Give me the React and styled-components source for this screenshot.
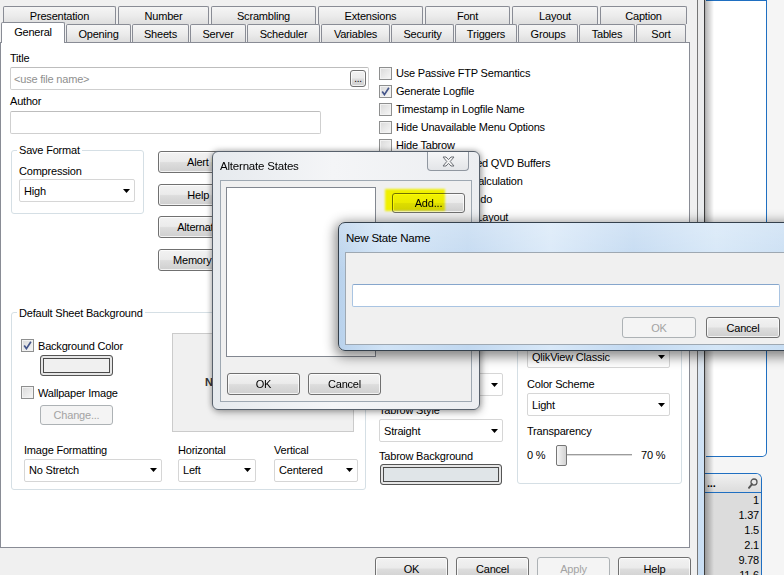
import React from "react";
import styled, { createGlobalStyle, css } from "styled-components";

const GlobalStyle = createGlobalStyle`
  html, body { margin: 0; padding: 0; background: #f0f0f0; overflow: hidden; }
  body {
    font-family: "Liberation Sans", Arial, sans-serif;
    font-size: 11px;
    letter-spacing: -0.2px;
    color: #000;
  }
  *, *::before, *::after { box-sizing: border-box; }
`;

const BACK_TABS = [
  ["Presentation", 113], ["Number", 91], ["Scrambling", 105], ["Extensions", 105],
  ["Font", 85], ["Layout", 86], ["Caption", 87],
];
const FRONT_TABS = [
  ["General", 65], ["Opening", 66], ["Sheets", 58], ["Server", 57], ["Scheduler", 74],
  ["Variables", 70], ["Security", 64], ["Triggers", 63], ["Groups", 61], ["Tables", 57], ["Sort", 51],
];
const OPTIONS = [
  ["Use Passive FTP Semantics", false],
  ["Generate Logfile", true],
  ["Timestamp in Logfile Name", false],
  ["Hide Unavailable Menu Options", false],
  ["Hide Tabrow", false],
  ["Keep Unreferenced QVD Buffers", false],
  ["Legacy Fractile Calculation", false],
  ["Enable Layout Undo", false],
  ["Use WebView in Layout", false],
];
const SIDE_BUTTONS = ["Alert Popup...", "Help Pages...", "Alternate States...", "Memory Statistics..."];
const LIST_VALUES = ["1", "1.37", "1.5", "2.1", "9.78", "11.6"];

/* ---------- layout shells ---------- */
const Screen = styled.div`
  position: relative;
  width: 784px;
  height: 575px;
  overflow: hidden;
  display: flex;
  background: #f0f0f0;
`;
const MainDialog = styled.div`
  flex: none;
  width: 697px;
  display: flex;
  flex-direction: column;
`;
const TabStrip = styled.div`
  flex: none;
  height: 42px;
  display: flex;
  flex-direction: column;
  position: relative;
  z-index: 2;
`;
const TabRow = styled.div`
  display: flex;
  align-items: flex-end;
  flex: none;
  height: 18px;
  margin-top: ${p => p.$mt || 0}px;
  padding-left: ${p => p.$pad}px;
  gap: ${p => p.$gap}px;
`;
const Tab = styled.div`
  flex: none;
  width: ${p => p.$w}px;
  height: 18px;
  display: flex;
  align-items: center;
  justify-content: center;
  padding-top: 1px;
  border: 1px solid #898c95;
  border-bottom: none;
  border-radius: 2px 2px 0 0;
  background: linear-gradient(#f5f5f5, #ececec 50%, #dedede);
  white-space: nowrap;
  ${p => p.$active && css`
    height: 21px;
    margin-bottom: -1px;
    padding-top: 0;
    padding-bottom: 3px;
    background: #fff;
    position: relative;
    z-index: 3;
  `}
`;
const Panel = styled.div`
  flex: none;
  width: 690px;
  height: 506px;
  background: #fff;
  border: 1px solid #898c95;
  display: grid;
  grid-template-columns: 369px 1fr;
  align-items: start;
  padding: 8px 0 0 9px;
`;
const Column = styled.div`
  display: flex;
  flex-direction: column;
  align-items: flex-start;
  padding-top: ${p => p.$pt || 0}px;
  margin-left: ${p => p.$ml || 0}px;
`;
const Row = styled.div`
  display: flex;
  align-items: flex-start;
  margin-top: ${p => p.$mt || 0}px;
  margin-left: ${p => p.$ml || 0}px;
  gap: ${p => p.$gap || 0}px;
`;

/* ---------- controls ---------- */
const FieldLabel = styled.div`
  height: 14px;
  line-height: 14px;
  white-space: nowrap;
  margin-top: ${p => p.$mt || 0}px;
`;
const TextBox = styled.div`
  flex: none;
  width: ${p => p.$w}px;
  height: 23px;
  margin-top: ${p => p.$mt || 0}px;
  display: flex;
  align-items: center;
  padding: 0 2px 0 3px;
  background: #fff;
  border: 1px solid #cfcfcf;
  border-top-color: #bdbdbd;
  border-radius: 2px;
  color: #8f8f8f;
  white-space: nowrap;
`;
const Placeholder = styled.span`
  flex: 1;
`;
const buttonFace = css`
  border: 1px solid #707070;
  border-radius: 3px;
  background: linear-gradient(#f2f2f2 0%, #ebebeb 47%, #dddddd 53%, #cfcfcf 100%);
  box-shadow: inset 0 0 0 1px rgba(255, 255, 255, 0.75);
`;
const DotsButton = styled.div`
  ${buttonFace};
  width: 16px;
  height: 17px;
  display: flex;
  align-items: flex-end;
  justify-content: center;
  padding-bottom: 2px;
  color: #000;
  font-size: 10px;
  line-height: 10px;
`;
const WinButton = styled.div`
  flex: none;
  width: ${p => p.$w}px;
  height: ${p => p.$h || 22}px;
  margin-left: ${p => p.$ml || 0}px;
  margin-top: ${p => p.$mt || 0}px;
  display: flex;
  align-items: center;
  justify-content: center;
  white-space: nowrap;
  overflow: hidden;
  ${buttonFace};
  ${p => p.$disabled && css`
    border-color: #adb2b5;
    background: #f4f4f4;
    box-shadow: none;
    color: #a3a3a3;
  `}
`;
const SelectBox = styled.div`
  flex: none;
  width: ${p => p.$w}px;
  height: 23px;
  margin-top: ${p => p.$mt || 0}px;
  display: flex;
  align-items: center;
  justify-content: space-between;
  padding: 0 4px 0 4px;
  background: #fff;
  border: 1px solid #d6d6d6;
  border-radius: 2px;
  white-space: nowrap;
`;
const Arrow = () => (
  <svg width="7" height="4" viewBox="0 0 7 4"><path d="M0 0H7L3.5 4Z" fill="#000" /></svg>
);
const Select = ({ w, mt, children }) => (
  <SelectBox $w={w} $mt={mt}><span>{children}</span><Arrow /></SelectBox>
);

const CheckRow = styled.div`
  display: flex;
  align-items: center;
  gap: 4px;
  flex: none;
  height: ${p => p.$h || 14}px;
  margin-top: ${p => p.$mt || 0}px;
  white-space: nowrap;
`;
const CheckBox = styled.span`
  flex: none;
  width: 13px;
  height: 13px;
  display: flex;
  align-items: center;
  justify-content: center;
  border: 1px solid #8e8f8f;
  background: linear-gradient(135deg, #d9d9d9, #f7f7f7);
  box-shadow: inset 0 0 0 1px #f2f2f2;
`;
const Check = ({ checked, children, h, mt }) => (
  <CheckRow $h={h} $mt={mt}>
    <CheckBox>
      {checked && (
        <svg width="9" height="9" viewBox="0 0 9 9">
          <path d="M1.2 4.6L3.4 7.6L7.9 0.8" fill="none" stroke="#44558a" strokeWidth="1.7" />
        </svg>
      )}
    </CheckBox>
    <span>{children}</span>
  </CheckRow>
);

const Group = styled.fieldset`
  flex: none;
  margin: 0;
  margin-left: ${p => p.$ml || 0}px;
  margin-top: ${p => p.$mt || 0}px;
  width: ${p => p.$w}px;
  height: ${p => p.$h}px;
  min-width: 0;
  border: 1px solid #d5dfe5;
  border-radius: 3px;
  padding: 0 0 0 ${p => p.$pl}px;
  display: flex;
  flex-direction: column;
  align-items: flex-start;
`;
const Legend = styled.legend`
  padding: 0 2px;
  margin-left: ${p => p.$ml || 0}px;
  line-height: 14px;
  white-space: nowrap;
`;
const ButtonStack = styled.div`
  display: flex;
  flex-direction: column;
  gap: 10.5px;
  padding-top: 8px;
  margin-left: 14px;
`;
const Swatch = styled.div`
  flex: none;
  width: ${p => p.$w}px;
  height: 21px;
  margin-left: ${p => p.$ml || 0}px;
  margin-top: ${p => p.$mt || 0}px;
  border: 1px solid #555;
  border-radius: 3px;
  background: ${p => p.$fill};
  box-shadow: inset 0 0 0 2px #e6e6e6, inset 0 0 0 3px #4a4a4a;
`;
const Preview = styled.div`
  width: 182px;
  height: 99px;
  display: flex;
  align-items: center;
  padding-left: 32px;
  background: #f0f0f0;
  border: 1px solid #cbcbcb;
  font-weight: bold;
  color: #333;
`;
const TopGrid = styled.div`
  display: grid;
  grid-template-columns: 151px 182px;
  margin-top: 13px;
`;
const SliderRow = styled.div`
  display: flex;
  align-items: center;
  height: 22px;
  margin-top: 6px;
  white-space: nowrap;
`;
const SliderEnd = styled.span`
  width: ${p => p.$w}px;
  margin-left: ${p => p.$ml || 0}px;
`;
const Slider = styled.div`
  width: 76px;
  height: 22px;
  display: flex;
  align-items: center;
`;
const Thumb = styled.div`
  flex: none;
  width: 11px;
  height: 21px;
  border: 1px solid #767676;
  border-radius: 2px;
  background: linear-gradient(90deg, #f7f7f7, #e4e4e4 50%, #d3d3d3);
`;
const Track = styled.div`
  flex: 1;
  height: 3px;
  border-top: 1px solid #9c9c9c;
  border-bottom: 1px solid #ffffff;
  background: #dadada;
`;
const ButtonBar = styled.div`
  flex: none;
  width: 691px;
  display: flex;
  justify-content: flex-end;
  gap: 8px;
  margin-top: 9px;
`;

/* ---------- sheet area at right ---------- */
const Divider = styled.div`
  flex: none;
  width: 8px;
  border-left: 1px solid #767676;
  border-right: 1px solid #3d3d3d;
  background: linear-gradient(#ececec 0%, #e9ecef 55%, #cfe2f5 75%, #c9def3 100%);
`;
const SheetArea = styled.div`
  position: relative;
  flex: 1;
  background: #f5f5f5;
  display: flex;
  flex-direction: column;
  align-items: flex-start;
  &::before {
    content: "";
    position: absolute;
    left: 0;
    top: 0;
    bottom: 0;
    width: 9px;
    background: linear-gradient(90deg, rgba(0,0,0,0.3), rgba(0,0,0,0));
    z-index: 2;
  }
`;
const SheetPanel = styled.div`
  flex: none;
  margin-left: 1px;
  width: 61px;
  height: 457px;
  background: #fff;
  border: 1px solid #1f6fc1;
  border-left: none;
  border-bottom-right-radius: 5px;
`;
const ListBox = styled.div`
  flex: none;
  margin-top: 16px;
  width: 57px;
  border: 1px solid #1f6fc1;
  border-left: none;
  border-bottom: none;
  border-top-right-radius: 6px;
  overflow: hidden;
`;
const ListHeader = styled.div`
  height: 19px;
  display: flex;
  align-items: center;
  justify-content: space-between;
  padding: 0 3px 0 2px;
  background: linear-gradient(#f1f1f1, #dcdcdc);
  border-bottom: 1px solid #1f6fc1;
  font-weight: bold;
`;
const ListRow = styled.div`
  height: 15px;
  line-height: 15px;
  text-align: right;
  padding-right: 2px;
  background: #dcdcdc;
`;

/* ---------- windows ---------- */
const Window = styled.div`
  position: absolute;
  left: ${p => p.$x}px;
  top: ${p => p.$y}px;
  width: ${p => p.$w}px;
  height: ${p => p.$h}px;
  z-index: ${p => p.$z};
  display: flex;
  flex-direction: column;
  padding: 0 7px ${p => p.$pb}px ${p => p.$pl}px;
  border: 1px solid #58616c;
  border-radius: 6px;
  ${p => p.$glass ? css`
    border-color: #34404c;
    border-radius: 7px;
    background:
      linear-gradient(rgba(255,255,255,0.25), rgba(255,255,255,0) 40%),
      linear-gradient(90deg, #b9d2ec 0%, #d0e3f6 10%, #c1d8f0 28%, #d8e8f8 46%, #c2d9f1 64%, #d4e6f7 82%, #c6dcf2 100%);
    box-shadow: 0 3px 12px 3px rgba(0,0,0,0.45);
  ` : css`
    background: linear-gradient(90deg, #e6eaee, #f4f5f7 45%, #eceef1);
    box-shadow: 0 0 6px rgba(0,0,0,0.35), 2px 3px 8px rgba(0,0,0,0.2);
  `}
`;
const TitleBar = styled.div`
  flex: none;
  height: ${p => p.$h}px;
  display: flex;
  align-items: center;
  padding-left: ${p => p.$pl || 0}px;
  font-size: 11.5px;
  white-space: nowrap;
`;
const CloseButton = styled.div`
  position: absolute;
  top: 0;
  right: 10px;
  width: 42px;
  height: 19px;
  display: flex;
  align-items: center;
  justify-content: center;
  border: 1px solid #9097a0;
  border-top: none;
  border-radius: 0 0 4px 4px;
  background: linear-gradient(#f6f7f8, #e3e5e8);
`;
const Client = styled.div`
  flex: 1;
  display: flex;
  flex-direction: column;
  align-items: flex-start;
  border: 1px solid #9ea8b2;
  background: #f0f0f0;
  padding: ${p => p.$pad};
`;
const StateList = styled.div`
  width: 150px;
  height: 170px;
  background: #fff;
  border: 1px solid #828790;
`;
const AddWrap = styled.div`
  position: relative;
  margin-left: 16px;
  margin-top: 6px;
`;
const Highlight = styled.span`
  position: absolute;
  left: -7px;
  top: -4px;
  width: 60px;
  height: 22px;
  background: #ffff00;
  mix-blend-mode: multiply;
  filter: blur(1px);
  pointer-events: none;
`;
const NameInput = styled.div`
  flex: none;
  width: 100%;
  height: 23px;
  background: #fff;
  border: 1px solid #a9c4e2;
  border-top-color: #86a6cc;
  border-radius: 2px;
`;
const DialogButtons = styled.div`
  align-self: stretch;
  display: flex;
  justify-content: flex-end;
  gap: 10px;
  margin-top: 10px;
`;

export default function App() {
  return (
    <>
      <GlobalStyle />
      <Screen>
        <MainDialog>
          <TabStrip>
            <TabRow $mt={6} $pad={3} $gap={2}>
              {BACK_TABS.map(([t, w]) => <Tab key={t} $w={w}>{t}</Tab>)}
            </TabRow>
            <TabRow $pad={1} $gap={1}>
              {FRONT_TABS.map(([t, w]) => (
                <Tab key={t} $w={w - 1} $active={t === "General"}>{t}</Tab>
              ))}
            </TabRow>
          </TabStrip>

          <Panel>
            <Column>
              <FieldLabel>Title</FieldLabel>
              <TextBox $w={359} $mt={2}>
                <Placeholder>&lt;use file name&gt;</Placeholder>
                <DotsButton>...</DotsButton>
              </TextBox>
              <FieldLabel $mt={4}>Author</FieldLabel>
              <TextBox $w={311} $mt={3} />

              <Row $mt={9}>
                <Group $ml={1} $w={133} $h={71} $pl={7}>
                  <Legend $ml={-2}>Save Format</Legend>
                  <FieldLabel $mt={7}>Compression</FieldLabel>
                  <Select w={116} mt={1}>High</Select>
                </Group>
                <ButtonStack>
                  {SIDE_BUTTONS.map(b => <WinButton key={b} $w={122}>{b}</WinButton>)}
                </ButtonStack>
              </Row>

              <Group $ml={1} $mt={35} $w={355} $h={184} $pl={9}>
                <Legend $ml={-4}>Default Sheet Background</Legend>
                <TopGrid>
                  <Column $pt={6}>
                    <Check checked>Background Color</Check>
                    <Swatch $w={73} $ml={19} $mt={2} $fill="#f0f0f0" />
                    <Check mt={10}>Wallpaper Image</Check>
                    <WinButton $w={73} $h={20} $ml={19} $mt={5} $disabled>Change...</WinButton>
                  </Column>
                  <Preview>No Image</Preview>
                </TopGrid>
                <Row $mt={11} $ml={3} $gap={16}>
                  <Column>
                    <FieldLabel>Image Formatting</FieldLabel>
                    <Select w={138} mt={2}>No Stretch</Select>
                  </Column>
                  <Column>
                    <FieldLabel>Horizontal</FieldLabel>
                    <Select w={78} mt={2}>Left</Select>
                  </Column>
                  <Column $ml={2}>
                    <FieldLabel>Vertical</FieldLabel>
                    <Select w={84} mt={2}>Centered</Select>
                  </Column>
                </Row>
              </Group>
            </Column>

            <Column $pt={13}>
              {OPTIONS.map(([t, c]) => <Check key={t} checked={c} h={18}>{t}</Check>)}
              <Row $mt={68} $gap={14}>
                <Column $pt={17}>
                  <FieldLabel>Styling Mode</FieldLabel>
                  <Select w={124} mt={2}>Advanced</Select>
                  <FieldLabel $mt={7}>Sheet Object Style</FieldLabel>
                  <Select w={124} mt={2}>Soft Shadow</Select>
                  <FieldLabel $mt={7}>Tabrow Style</FieldLabel>
                  <Select w={124} mt={2}>Straight</Select>
                  <FieldLabel $mt={7}>Tabrow Background</FieldLabel>
                  <Swatch $w={122} $ml={1} $mt={1} $fill="#e0e5e8" />
                </Column>
                <Group $w={165} $h={190} $pl={9}>
                  <Legend $ml={-4}>Selection Appearance</Legend>
                  <FieldLabel $mt={19}>Selection Style</FieldLabel>
                  <Select w={143} mt={4}>QlikView Classic</Select>
                  <FieldLabel $mt={9}>Color Scheme</FieldLabel>
                  <Select w={143} mt={2}>Light</Select>
                  <FieldLabel $mt={8}>Transparency</FieldLabel>
                  <SliderRow>
                    <SliderEnd $w={29}>0 %</SliderEnd>
                    <Slider><Thumb /><Track /></Slider>
                    <SliderEnd $ml={9}>70 %</SliderEnd>
                  </SliderRow>
                </Group>
              </Row>
            </Column>
          </Panel>

          <ButtonBar>
            <WinButton $w={73} $h={23}>OK</WinButton>
            <WinButton $w={73} $h={23}>Cancel</WinButton>
            <WinButton $w={73} $h={23} $disabled>Apply</WinButton>
            <WinButton $w={73} $h={23}>Help</WinButton>
          </ButtonBar>
        </MainDialog>

        <Divider />

        <SheetArea>
          <SheetPanel />
          <ListBox>
            <ListHeader>
              <span>...</span>
              <svg width="10" height="11" viewBox="0 0 10 11">
                <circle cx="6" cy="4" r="3" fill="none" stroke="#555" strokeWidth="1.3" />
                <path d="M4 6.2L1 9.8" stroke="#555" strokeWidth="2" strokeLinecap="round" />
              </svg>
            </ListHeader>
            {LIST_VALUES.map(v => <ListRow key={v}>{v}</ListRow>)}
          </ListBox>
        </SheetArea>

        <Window $x={212} $y={151} $w={268} $h={259} $z={10} $pb={7} $pl={7}>
          <TitleBar $h={28}>Alternate States</TitleBar>
          <CloseButton>
            <svg width="13" height="11" viewBox="0 0 13 11">
              <path d="M1 1H4L6.5 3.6L9 1H12L8.2 5.5L12 10H9L6.5 7.4L4 10H1L4.8 5.5Z"
                fill="#f4f4f4" stroke="#6b6f75" strokeWidth="1" strokeLinejoin="round" />
            </svg>
          </CloseButton>
          <Client $pad="6px 0 0 5px">
            <Row>
              <StateList />
              <AddWrap>
                <WinButton $w={73} $h={20}>Add...</WinButton>
                <Highlight />
              </AddWrap>
            </Row>
            <Row $mt={16} $ml={1} $gap={8}>
              <WinButton $w={73}>OK</WinButton>
              <WinButton $w={73}>Cancel</WinButton>
            </Row>
          </Client>
        </Window>

        <Window $x={338} $y={222} $w={462} $h={129} $z={20} $pb={5} $pl={6} $glass>
          <TitleBar $h={29} $pl={1}>New State Name</TitleBar>
          <Client $pad="31px 11px 0 6px">
            <NameInput />
            <DialogButtons>
              <WinButton $w={74} $h={21} $disabled>OK</WinButton>
              <WinButton $w={74} $h={21}>Cancel</WinButton>
            </DialogButtons>
          </Client>
        </Window>
      </Screen>
    </>
  );
}
